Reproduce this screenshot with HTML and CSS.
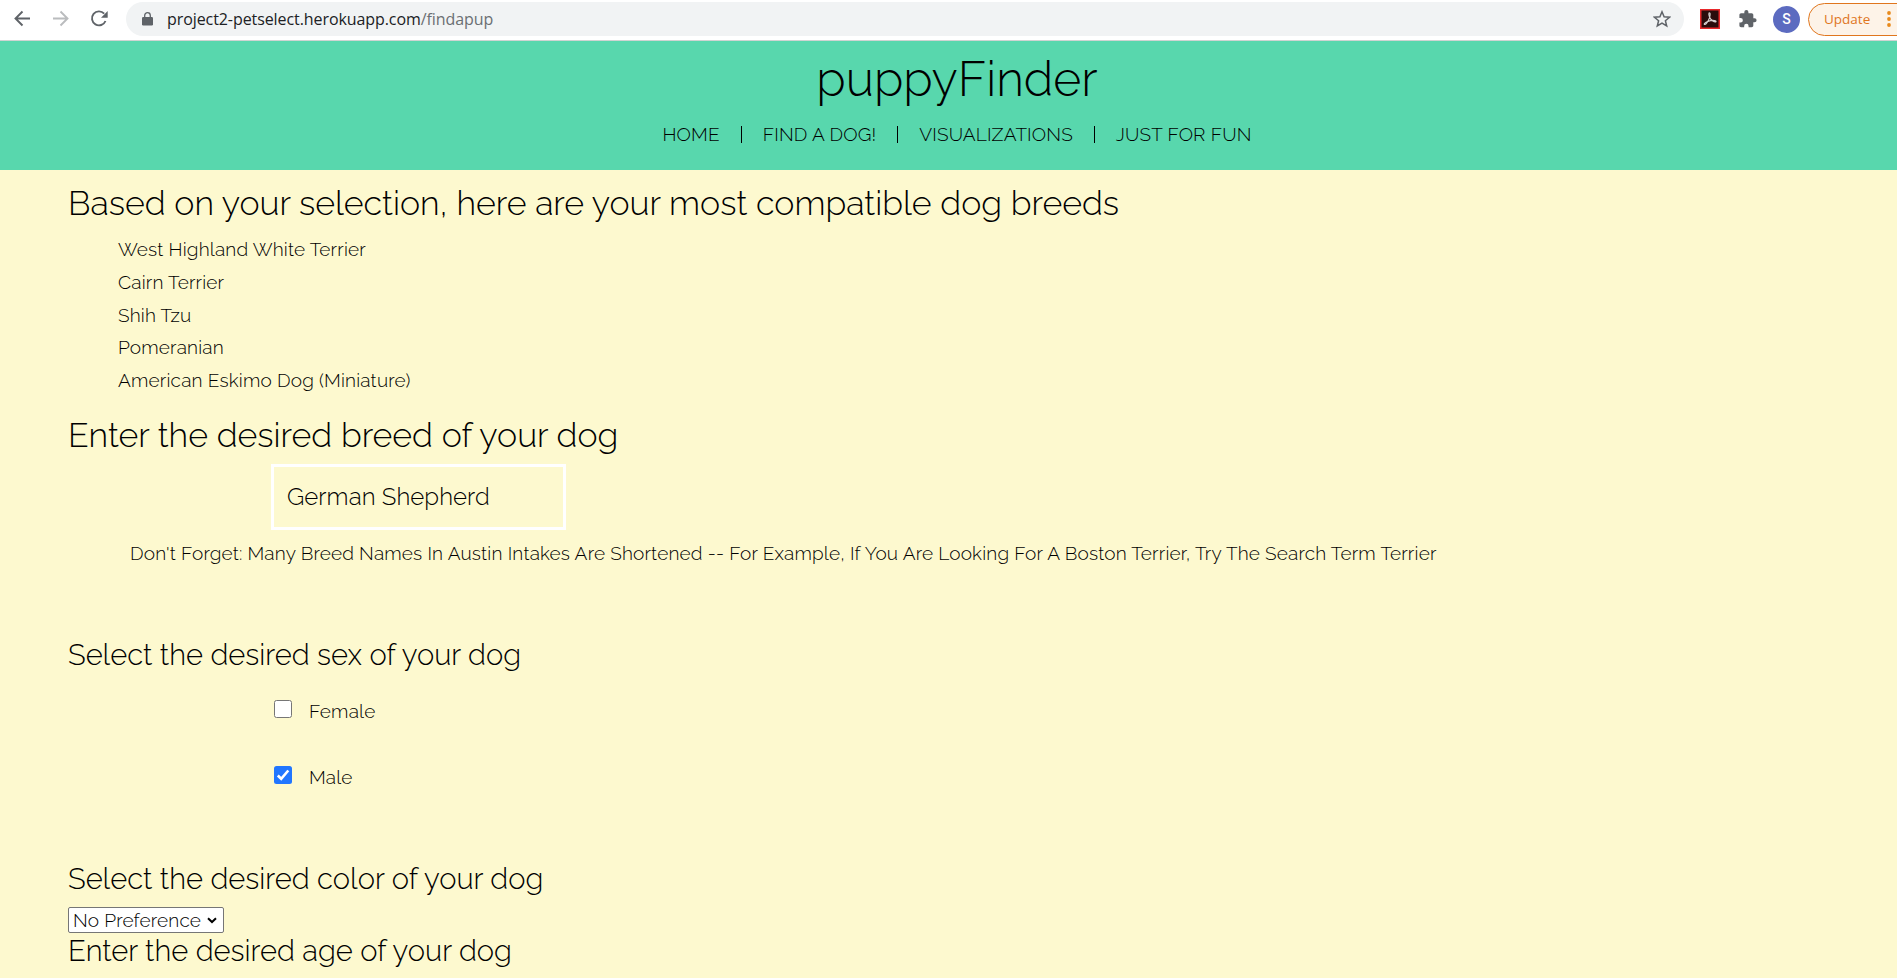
FILE: index.html
```html
<!DOCTYPE html>
<html lang="en">
<head>
<meta charset="utf-8">
<title>puppyFinder</title>
<link rel="stylesheet" href="styles.css">
</head>
<body>
<div class="toolbar">
  <svg class="nav-icons" width="126" height="40" viewBox="0 0 126 40" fill="none" stroke-width="1.9">
    <path d="M30 19.500H16M22.500 12.500L15.500 19.500L22.500 26.500" stroke="#5f6368"/>
    <path d="M53 19.500H67M60.500 12.500L67.500 19.500L60.500 26.500" stroke="#babcbe"/>
    <path d="M105.500 22A7 7 0 1 1 104.200 14.700" stroke="#5f6368"/>
    <path d="M107.700 12V18.700H101Z" fill="#5f6368"/>
  </svg>
  <div class="address">
    <svg class="lock" width="11" height="14" viewBox="0 0 11 14"><rect y="5" width="11" height="8.500" rx="1.200" fill="#5f6368"/><path d="M2.700 6V3.500a2.800 2.800 0 0 1 5.600 0V6" fill="none" stroke="#5f6368" stroke-width="1.300"/></svg>
    <span class="url">project2-petselect.herokuapp.com<span class="path">/findapup</span></span>
    <svg class="star" width="18" height="18" viewBox="0 0 18 18"><path d="M9 1.800L11.100 6.800L16.500 7.200L12.400 10.700L13.700 16L9 13.100L4.300 16L5.600 10.700L1.500 7.200L6.900 6.800Z" fill="none" stroke="#5f6368" stroke-width="1.500"/></svg>
  </div>
  <svg class="pdf" width="20" height="20" viewBox="0 0 20 20"><rect x=".75" y=".75" width="18.500" height="18.500" fill="#2a0c0c" stroke="#e8282b" stroke-width="1.500"/><path d="M9 4C10.600 3.200 10.300 6.500 9.400 9C8.200 12 6 15.800 4.500 15.500C3.300 14.700 7 12.300 10.500 11.600C13.500 11.100 16.600 11.700 16 12.700C14.700 13.600 10.800 11.300 9.500 8C8.900 6 8.400 4.800 9 4Z" fill="none" stroke="#d8d0d0" stroke-width="1.100"/></svg>
  <svg class="puzzle" width="18" height="18" viewBox="1.500 1 22 22"><path fill="#5f6368" d="M20.500 11H19V7c0-1.100-.9-2-2-2h-4V3.500a2.500 2.500 0 0 0-5 0V5H4c-1.100 0-2 .9-2 2v3.800h1.500a2.700 2.700 0 0 1 0 5.400H2V20c0 1.100.9 2 2 2h3.800v-1.500a2.700 2.700 0 0 1 5.400 0V22H17c1.100 0 2-.9 2-2v-4h1.500a2.500 2.500 0 0 0 0-5z"/></svg>
  <span class="avatar">S</span>
  <div class="update"><span>Update</span><svg width="4" height="16" viewBox="0 0 4 16" fill="#e88a1c"><circle cx="2" cy="2" r="1.900"/><circle cx="2" cy="8" r="1.900"/><circle cx="2" cy="14" r="1.900"/></svg></div>
</div>
<header class="header">
  <h1 class="brand">puppyFinder</h1>
  <nav class="menu">
    <a class="home">HOME</a><i class="bar"></i><a>FIND A DOG!</a><i class="bar"></i><a>VISUALIZATIONS</a><i class="bar"></i><a>JUST FOR FUN</a>
  </nav>
</header>
<main class="content">
  <h2 class="big">Based on your selection, here are your most compatible dog breeds</h2>
  <ul class="breeds">
    <li>West Highland White Terrier</li>
    <li>Cairn Terrier</li>
    <li>Shih Tzu</li>
    <li>Pomeranian</li>
    <li>American Eskimo Dog (Miniature)</li>
  </ul>
  <h2 class="big breed-title">Enter the desired breed of your dog</h2>
  <div class="field">German Shepherd</div>
  <p class="note">Don't Forget: Many Breed Names In Austin Intakes Are Shortened -- For Example, If You Are Looking For A Boston Terrier, Try The Search Term Terrier</p>
  <h3 class="mid sex-title">Select the desired sex of your dog</h3>
  <label class="option"><span class="box"></span><span>Female</span></label>
  <label class="option male"><span class="box checked"><svg width="18" height="18" viewBox="0 0 18 18"><path d="M3.800 9.500L7.200 12.800L14.300 4.500" fill="none" stroke="#fff" stroke-width="2.600"/></svg></span><span>Male</span></label>
  <h3 class="mid color-title">Select the desired color of your dog</h3>
  <div class="select"><span>No Preference</span><svg width="10" height="7" viewBox="0 0 10 7"><path d="M1 1.200L5 5L9 1.200" fill="none" stroke="#000" stroke-width="2"/></svg></div>
  <h3 class="mid">Enter the desired age of your dog</h3>
</main>
</body>
</html>
```
FILE: styles.css
```css
* { box-sizing: border-box; }
html { overflow: hidden; }
body { margin: 0; width: 1897px; height: 978px; overflow: hidden; background: #fdf9cf; color: #000; font: 300 19px/24px Raleway, Lato, sans-serif; letter-spacing: .18px; white-space: nowrap; }
h1, h2, h3, p, ul { margin: 0; padding: 0; font-weight: 300; letter-spacing: 0; }
.toolbar { display: flex; align-items: center; height: 41px; padding-bottom: 2px; background: #fff; border-bottom: 1px solid #d0d4d3; font-family: "Segoe UI", "Open Sans", sans-serif; font-weight: 400; letter-spacing: 0; }
.toolbar > * { flex: none; }
.nav-icons { height: 40px; }
.address { display: flex; align-items: center; width: 1558px; height: 34px; padding: 0 13px 0 16px; border-radius: 17px; background: #f1f3f4; }
.url { margin-left: 14px; font-size: 16px; letter-spacing: -.08px; color: #202124; }
.path { color: #6b6f73; }
.star { margin-left: auto; }
.pdf { margin-left: 16px; }
.puzzle { margin-left: 19px; }
.avatar { width: 27px; height: 27px; margin-left: 16px; border-radius: 50%; background: #5c6bc0; color: #fff; font: 500 14px/27px Roboto, sans-serif; text-align: center; }
.update { display: flex; align-items: center; gap: 17px; width: 110px; height: 33px; margin-left: 8px; padding-left: 15px; border: 1px solid #e0761e; border-radius: 17px; background: #fdf3e8; color: #e0761e; font-size: 13.500px; }
.header { width: 1914px; height: 129px; padding-top: 9px; background: #58d7ad; }
.brand { font-size: 48px; line-height: 58px; text-align: center; }
.menu { display: flex; align-items: center; justify-content: center; margin-top: 14px; }
.bar { width: 1px; height: 17px; margin: 0 21px; background: #000; }
.content { padding: 12.500px 68px 0; }
.big { font-size: 33.950px; line-height: 40px; }
.breeds { margin-top: 10.500px; padding-left: 50px; list-style: none; line-height: 32.750px; letter-spacing: .18px; }
.breed-title { margin-top: 18px; }
.field { width: 295px; height: 66px; margin: 9.250px 0 0 203px; padding-left: 13px; border: 3px solid #fff; font-size: 24px; line-height: 59px; letter-spacing: .08px; }
.note { margin: 11.300px 0 0 62px; letter-spacing: .18px; }
.mid { font-size: 29.150px; line-height: 36px; }
.sex-title { margin-top: 72px; }
.option { display: flex; margin: 26px 0 0 206px; }
.option.male { margin-top: 42px; }
.box { width: 18px; height: 18px; margin: 1px 17px 0 0; border: 1px solid #767676; border-radius: 2.500px; background: #fff; }
.checked { border: 0; background: #2176ff; }
.checked svg { display: block; }
.color-title { margin-top: 71.400px; }
.select { display: flex; align-items: center; justify-content: space-between; width: 156px; height: 26px; margin-top: 10.500px; padding: 0 6px 0 4px; border: 1px solid #767676; border-radius: 2px; background: #fff; }
```
